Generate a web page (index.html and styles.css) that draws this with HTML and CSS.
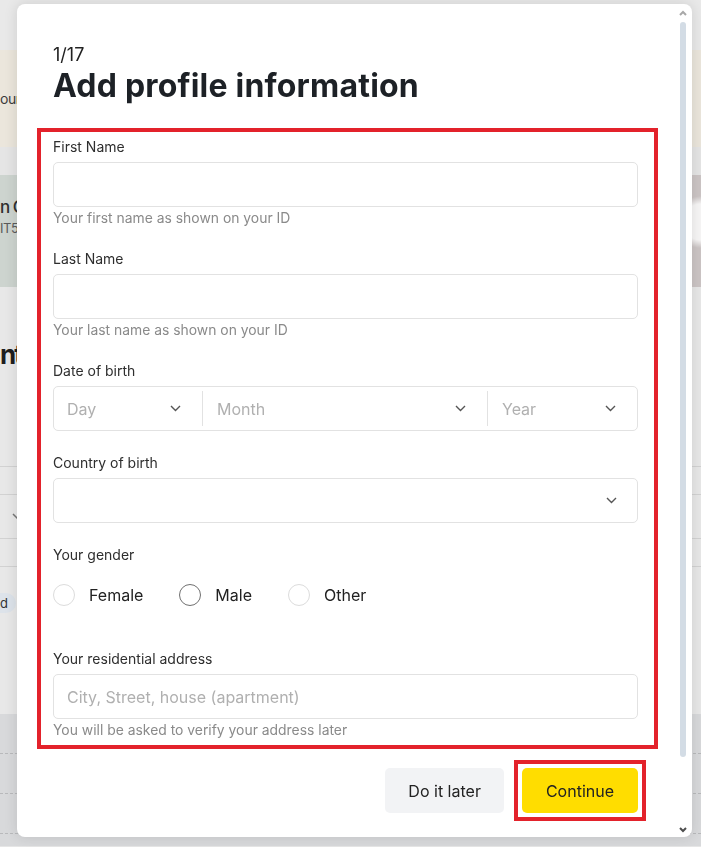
FILE: index.html
```html
<!DOCTYPE html>
<html lang="en">
<head>
  <meta charset="UTF-8" />
  <title>Add profile information</title>
  <meta name="viewport" content="width=device-width, initial-scale=1.0" />
  <link rel="stylesheet" href="styles.css">
</head>
<body>
  <!-- dimmed page behind the dialog -->
  <div class="page">
    <div class="topbar"></div>
    <div class="banner"><span>our</span></div>
    <div class="spacer"></div>
    <div class="promo">
      <span class="promo-title">n C</span>
      <span class="promo-sub">IT5</span>
    </div>
    <div class="title-area"><h2>nt</h2></div>
    <div class="row row-thin"></div>
    <div class="row row-filter">
      <svg width="12" height="7" viewBox="0 0 12 7"><polyline points="1,1 6,6 11,1" fill="none" stroke="#777" stroke-width="1.5"/></svg>
    </div>
    <div class="row row-thin"></div>
    <div class="row row-tags"><span class="tag">d</span></div>
    <div class="bottom">
      <div class="dash"></div>
      <div class="dash"></div>
      <div class="dash"></div>
    </div>
  </div>

  <div class="modal">
    <div class="modal-body">
      <div class="step">1/17</div>
      <h1>Add profile information</h1>

      <form class="form marked">
        <div class="field">
          <label for="first_name">First Name</label>
          <input type="text" id="first_name" />
          <div class="hint">Your first name as shown on your ID</div>
        </div>

        <div class="field">
          <label for="last_name">Last Name</label>
          <input type="text" id="last_name" />
          <div class="hint">Your last name as shown on your ID</div>
        </div>

        <div class="field">
          <label>Date of birth</label>
          <div class="date-group">
            <div class="seg seg-day">
              <span class="placeholder">Day</span>
              <svg width="11" height="7" viewBox="0 0 11 7"><polyline points="1,1 5.5,5.5 10,1" fill="none" stroke="#555" stroke-width="1.4"/></svg>
            </div>
            <div class="seg seg-month">
              <span class="placeholder">Month</span>
              <svg width="11" height="7" viewBox="0 0 11 7"><polyline points="1,1 5.5,5.5 10,1" fill="none" stroke="#555" stroke-width="1.4"/></svg>
            </div>
            <div class="seg seg-year">
              <span class="placeholder">Year</span>
              <svg width="11" height="7" viewBox="0 0 11 7"><polyline points="1,1 5.5,5.5 10,1" fill="none" stroke="#555" stroke-width="1.4"/></svg>
            </div>
          </div>
        </div>

        <div class="field">
          <label>Country of birth</label>
          <div class="select">
            <span></span>
            <svg width="11" height="7" viewBox="0 0 11 7"><polyline points="1,1 5.5,5.5 10,1" fill="none" stroke="#555" stroke-width="1.4"/></svg>
          </div>
        </div>

        <div class="field">
          <label>Your gender</label>
          <div class="radios">
            <div class="radio"><span class="circle"></span>Female</div>
            <div class="radio"><span class="circle hover"></span>Male</div>
            <div class="radio"><span class="circle"></span>Other</div>
          </div>
        </div>

        <div class="field field-address">
          <label for="address">Your residential address</label>
          <input type="text" id="address" placeholder="City, Street, house (apartment)" />
          <div class="hint">You will be asked to verify your address later</div>
        </div>
      </form>

      <div class="actions">
        <button type="button" class="btn btn-light">Do it later</button>
        <span class="marked-btn"><button type="button" class="btn btn-primary">Continue</button></span>
      </div>
    </div>

    <div class="scrollbar">
      <svg width="8" height="6" viewBox="0 0 8 6"><polyline points="1,5 4,2 7,5" fill="none" stroke="#a8a8a8" stroke-width="2"/></svg>
      <div class="thumb"></div>
      <svg class="down" width="8" height="6" viewBox="0 0 8 6"><polyline points="1,1 4,4 7,1" fill="none" stroke="#4d4d4d" stroke-width="2"/></svg>
    </div>
  </div>
</body>
</html>
```

FILE: styles.css
```css
* {
  box-sizing: border-box;
}

body {
  margin: 0;
  font-family: 'Inter', 'Liberation Sans', sans-serif;
  background: #e6e6e6;
  color: #222;
  overflow: hidden;
}

/* background page */
.page {
  height: 847px;
}

.topbar {
  height: 50px;
  background: #e9e9e9;
}

.banner {
  height: 97px;
  background: #ebe6dc;
  display: flex;
  align-items: center;
  font-size: 14px;
  color: #3c3c3c;
}

.banner span {
  letter-spacing: -0.5px;
}

.spacer {
  height: 28px;
  background: #e5e5e5;
}

.promo {
  height: 112px;
  padding-top: 20px;
  display: flex;
  flex-direction: column;
  background:
    radial-gradient(circle at 100% 42%, rgba(255,255,255,0.85) 0 18px, transparent 26px),
    linear-gradient(90deg, #cdd4cf 0 50%, #ccc5c5 50%);
}

.promo-title {
  font-size: 17px;
  line-height: 24px;
  font-weight: 500;
  letter-spacing: -1px;
  color: #2f2f2f;
}

.promo-sub {
  font-size: 13px;
  line-height: 18px;
  letter-spacing: -0.5px;
  color: #5a5a5a;
}

.title-area {
  height: 180px;
  padding-top: 46px;
  background: #e8e8e8;
  border-bottom: 1px solid #d2d2d2;
}

.title-area h2 {
  margin: 0;
  font-size: 26px;
  line-height: 44px;
  font-weight: 700;
  letter-spacing: -2px;
  color: #1e1e1e;
}

.row {
  background: #e8e8e8;
  border-bottom: 1px solid #d2d2d2;
}

.row-thin {
  height: 28px;
}

.row-filter {
  height: 44px;
  display: flex;
  align-items: center;
  padding-left: 12px;
}

.row-tags {
  height: 147px;
  padding-top: 25px;
  border-bottom: none;
}

.tag {
  display: inline-block;
  height: 20px;
  line-height: 20px;
  padding: 0 8px 0 0;
  border-radius: 0 10px 10px 0;
  background: #dde3ea;
  font-size: 13px;
  color: #333;
}

.bottom {
  height: 132px;
  background: #d8d9db;
}

.dash {
  height: 40px;
  border-bottom: 1px dashed #b8b9bb;
}

/* dialog */
.modal {
  position: fixed;
  top: 4px;
  left: 17px;
  width: 675px;
  height: 833px;
  background: #fff;
  border-radius: 8px;
  box-shadow: 0 0 14px rgba(0,0,0,0.12);
  display: flex;
}

.modal-body {
  width: 660px;
  padding: 40px 39px 0 36px;
}

.step {
  font-size: 18px;
  line-height: 22px;
  color: #222;
}

h1 {
  margin: 2px 0 0;
  font-size: 32px;
  line-height: 36px;
  font-weight: 700;
  color: #1d2126;
  letter-spacing: 0.2px;
}

.marked {
  margin: 24px -20px 0 -16px;
  padding: 5px 16px 6px 12px;
  border: 4px solid #e3222b;
}

.field + .field {
  margin-top: 22px;
}

label {
  display: block;
  font-size: 14px;
  line-height: 20px;
  color: #2e2e2e;
  margin-bottom: 5px;
}

input[type="text"] {
  display: block;
  width: 100%;
  height: 45px;
  padding: 0 13px;
  border: 1px solid #e2e2e2;
  border-radius: 5px;
  font-family: inherit;
  font-size: 16px;
  color: #222;
  outline: none;
}

input::placeholder {
  color: #b0b0b0;
}

.hint {
  margin-top: 2px;
  font-size: 13.9px;
  line-height: 18px;
  color: #8a8a8a;
}

.date-group {
  display: flex;
  height: 45px;
  padding: 4px 0;
  border: 1px solid #e2e2e2;
  border-radius: 5px;
}

.seg {
  display: flex;
  align-items: center;
  justify-content: space-between;
  padding: 0 21px 0 13px;
}

.seg + .seg {
  border-left: 1px solid #e2e2e2;
  padding-left: 14px;
}

.seg-day {
  width: 148px;
}

.seg-month {
  flex: 1;
}

.seg-year {
  width: 150px;
}

.placeholder {
  font-size: 16px;
  color: #b0b0b0;
}

.select {
  display: flex;
  align-items: center;
  justify-content: space-between;
  height: 45px;
  padding: 0 20px 0 13px;
  border: 1px solid #e2e2e2;
  border-radius: 5px;
}

.radios {
  display: flex;
  gap: 36px;
  padding: 14px 0 21px;
}

.radio {
  display: flex;
  align-items: center;
  gap: 14px;
  font-size: 16px;
  line-height: 22px;
  color: #222;
}

.circle {
  width: 22px;
  height: 22px;
  border-radius: 50%;
  border: 1px solid #dcdcdc;
}

.circle.hover {
  border: 1.5px solid #707070;
}

.actions {
  display: flex;
  justify-content: flex-end;
  align-items: center;
  gap: 10px;
  margin-top: 19px;
}

.btn {
  height: 45px;
  border: none;
  border-radius: 5px;
  font-family: inherit;
  font-size: 16px;
  color: #222;
  cursor: pointer;
}

.btn-light {
  background: #f2f3f5;
  padding: 0 23px;
}

.btn-primary {
  background: #ffdd00;
  padding: 0 24px;
}

.marked-btn {
  display: block;
  padding: 4px;
  margin: -8px -8px -8px 0;
  border: 4px solid #e3222b;
}

.marked-btn .btn {
  display: block;
}

/* fake scrollbar */
.scrollbar {
  width: 12px;
  margin-right: 3px;
  padding: 6px 0 4px;
  display: flex;
  flex-direction: column;
  align-items: center;
}

.thumb {
  width: 6px;
  height: 735px;
  margin-top: 6px;
  border-radius: 3px;
  background: #d3dce5;
}

.scrollbar .down {
  margin-top: auto;
}
```
